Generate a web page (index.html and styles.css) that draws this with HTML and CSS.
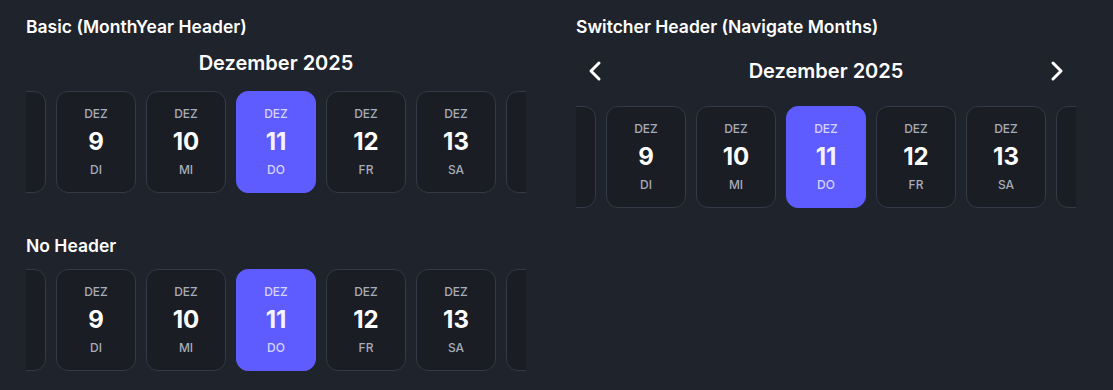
FILE: index.html
```html
<!DOCTYPE html>
<html lang="de">
<head>
<meta charset="utf-8">
<title>Date Strip</title>
<link rel="stylesheet" href="styles.css">
</head>
<body>
<main class="page">
  <div class="column">
    <section class="section">
      <h2 class="section-title">Basic (MonthYear Header)</h2>
      <div class="month-header">Dezember 2025</div>
      <div class="strip">
        <div class="track">
          <div class="day edge" aria-hidden="true"></div>
          <div class="day"><span class="mon">DEZ</span><span class="num">9</span><span class="wd">DI</span></div>
          <div class="day"><span class="mon">DEZ</span><span class="num">10</span><span class="wd">MI</span></div>
          <div class="day selected"><span class="mon">DEZ</span><span class="num">11</span><span class="wd">DO</span></div>
          <div class="day"><span class="mon">DEZ</span><span class="num">12</span><span class="wd">FR</span></div>
          <div class="day"><span class="mon">DEZ</span><span class="num">13</span><span class="wd">SA</span></div>
          <div class="day edge" aria-hidden="true"></div>
        </div>
      </div>
    </section>
    <section class="section">
      <h2 class="section-title">No Header</h2>
      <div class="strip">
        <div class="track">
          <div class="day edge" aria-hidden="true"></div>
          <div class="day"><span class="mon">DEZ</span><span class="num">9</span><span class="wd">DI</span></div>
          <div class="day"><span class="mon">DEZ</span><span class="num">10</span><span class="wd">MI</span></div>
          <div class="day selected"><span class="mon">DEZ</span><span class="num">11</span><span class="wd">DO</span></div>
          <div class="day"><span class="mon">DEZ</span><span class="num">12</span><span class="wd">FR</span></div>
          <div class="day"><span class="mon">DEZ</span><span class="num">13</span><span class="wd">SA</span></div>
          <div class="day edge" aria-hidden="true"></div>
        </div>
      </div>
    </section>
  </div>
  <div class="column">
    <section class="section">
      <h2 class="section-title">Switcher Header (Navigate Months)</h2>
      <div class="switcher">
        <button class="nav-btn" aria-label="Vorheriger Monat">
          <svg width="24" height="24" viewBox="0 0 24 24" fill="none" stroke="currentColor" stroke-width="3" stroke-linecap="round" stroke-linejoin="round"><path d="M16 4 8 12l8 8"/></svg>
        </button>
        <div class="switcher-title">Dezember 2025</div>
        <button class="nav-btn" aria-label="Nächster Monat">
          <svg width="24" height="24" viewBox="0 0 24 24" fill="none" stroke="currentColor" stroke-width="3" stroke-linecap="round" stroke-linejoin="round"><path d="m8 4 8 8-8 8"/></svg>
        </button>
      </div>
      <div class="strip">
        <div class="track">
          <div class="day edge" aria-hidden="true"></div>
          <div class="day"><span class="mon">DEZ</span><span class="num">9</span><span class="wd">DI</span></div>
          <div class="day"><span class="mon">DEZ</span><span class="num">10</span><span class="wd">MI</span></div>
          <div class="day selected"><span class="mon">DEZ</span><span class="num">11</span><span class="wd">DO</span></div>
          <div class="day"><span class="mon">DEZ</span><span class="num">12</span><span class="wd">FR</span></div>
          <div class="day"><span class="mon">DEZ</span><span class="num">13</span><span class="wd">SA</span></div>
          <div class="day edge" aria-hidden="true"></div>
        </div>
      </div>
    </section>
  </div>
</main>
</body>
</html>
```

FILE: styles.css
```css
* { box-sizing: border-box; }

html, body {
  margin: 0;
  padding: 0;
  background: #1f232b;
  color: #ffffff;
  font-family: Inter, "Noto Sans", sans-serif;
}

.page {
  display: grid;
  grid-template-columns: 500px 500px;
  column-gap: 50px;
  padding: 16px 26px;
  align-items: start;
}

.column {
  display: flex;
  flex-direction: column;
  gap: 42px;
}

.section {
  display: flex;
  flex-direction: column;
}

.section-title {
  margin: 0 0 12px;
  font-size: 17.5px;
  line-height: 22px;
  font-weight: 600;
  color: #ffffff;
}

.month-header {
  text-align: center;
  font-size: 20px;
  line-height: 26px;
  font-weight: 600;
  margin-bottom: 15px;
}

.switcher {
  display: flex;
  align-items: center;
  justify-content: space-between;
  height: 42px;
  margin-bottom: 14px;
}

.switcher-title {
  font-size: 20px;
  line-height: 26px;
  font-weight: 600;
}

.nav-btn {
  width: 38px;
  height: 38px;
  padding: 0;
  border: none;
  background: transparent;
  color: #ffffff;
  display: flex;
  align-items: center;
  justify-content: center;
}

.strip {
  width: 500px;
  overflow: hidden;
}

.track {
  display: flex;
  gap: 10px;
  margin-left: -60px;
}

.day {
  flex: 0 0 80px;
  height: 102px;
  border: 1px solid #343946;
  border-radius: 12px;
  background: #1a1d24;
  display: flex;
  flex-direction: column;
  align-items: center;
  justify-content: center;
  gap: 4px;
}

.mon, .wd {
  font-size: 12px;
  line-height: 16px;
  font-weight: 500;
  color: #a7acb8;
}

.num {
  font-size: 24px;
  line-height: 32px;
  font-weight: 700;
  color: #ffffff;
}

.day.selected {
  background: #5e5cff;
  border-color: #5e5cff;
}

.day.selected .mon,
.day.selected .wd {
  color: #d5d4ff;
}

.day.selected .num {
  color: #f4f4ff;
}
```
